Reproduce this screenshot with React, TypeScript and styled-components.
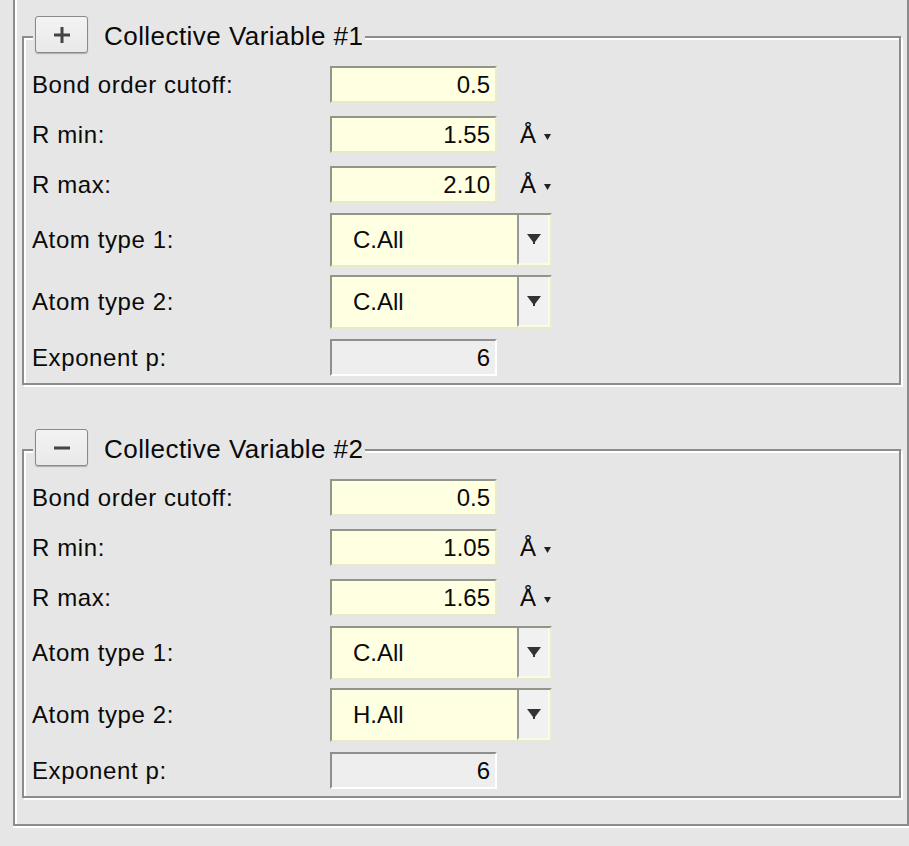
import styled, { createGlobalStyle } from "styled-components";

const GlobalStyle = createGlobalStyle`
  html, body {
    margin: 0;
    padding: 0;
    background: #e6e6e6;
  }
  body {
    font-family: "Liberation Sans", Arial, sans-serif;
    color: #0a0a0a;
  }
`;

const Page = styled.div`
  width: 909px;
  height: 846px;
  overflow: hidden;
`;

const Outer = styled.div`
  margin-left: 13px;
  width: 896px;
  box-sizing: border-box;
  padding: 36px 6px 26px 7px;
  border: 2px solid #8c8c8c;
  border-top: none;
  box-shadow: inset 2px 0 0 #fff, 0 2px 0 #fff;
`;

const Group = styled.div<{ $gap?: number }>`
  box-sizing: border-box;
  margin-top: ${(p) => p.$gap ?? 0}px;
  width: 879px;
  border: 2px solid #8c8c8c;
  box-shadow: inset 2px 2px 0 #fff, 2px 2px 0 #fff;
  padding: 0 0 7px 8px;
`;

const Legend = styled.div`
  display: flex;
  align-items: center;
  width: fit-content;
  margin: -22px 0 0 1px;
  padding: 0 2px;
  height: 37px;
  background: #e6e6e6;
`;

const ToggleButton = styled.button`
  box-sizing: border-box;
  width: 53px;
  height: 37px;
  padding: 0;
  display: flex;
  align-items: center;
  justify-content: center;
  border: 1px solid #8a8a8a;
  border-radius: 3px;
  background: linear-gradient(#f3f3f3, #e9e9e9);
  box-shadow: 0 1px 1px rgba(0, 0, 0, 0.25);
`;

const Title = styled.span`
  margin-left: 16px;
  padding-top: 4px;
  font-size: 26px;
  letter-spacing: 0.45px;
`;

const Row = styled.div<{ $h: number; $top: number }>`
  display: flex;
  align-items: center;
  height: ${(p) => p.$h}px;
  margin-top: ${(p) => p.$top}px;
`;

const Label = styled.div`
  width: 298px;
  font-size: 24px;
  letter-spacing: 0.6px;
`;

const Field = styled.div<{ $disabled?: boolean }>`
  box-sizing: border-box;
  width: 167px;
  height: 37px;
  padding: 0 5px 0 0;
  display: flex;
  align-items: center;
  justify-content: flex-end;
  font-size: 24px;
  background: ${(p) => (p.$disabled ? "#eeeeee" : "#ffffe2")};
  border-style: solid;
  border-width: 2px;
  border-color: ${(p) =>
    p.$disabled
      ? "#8e8e8e #ffffff #ffffff #8e8e8e"
      : "#92958a #ecebd2 #e8e8cc #92958a"};
`;

const Unit = styled.div`
  display: flex;
  align-items: center;
  margin-left: 23px;
  font-size: 24px;
  gap: 8px;
`;

const Combo = styled.div`
  box-sizing: border-box;
  width: 222px;
  height: 54px;
  display: flex;
  background: #ffffe2;
  border-style: solid;
  border-width: 2px;
  border-color: #92958a #ecebd2 #e8e8cc #92958a;
`;

const ComboText = styled.div`
  flex: 1;
  display: flex;
  align-items: center;
  padding-left: 21px;
  font-size: 24px;
`;

const ComboArrow = styled.div`
  box-sizing: border-box;
  width: 33px;
  display: flex;
  align-items: center;
  justify-content: center;
  background: #f1f1f1;
  border-left: 2px solid #9a9a9a;
  border-right: 2px solid #fafae8;
  border-bottom: 2px solid #fafae8;
`;

function Caret() {
  return (
    <svg width="7" height="6" viewBox="0 0 7 6" style={{ marginTop: 4 }}>
      <polygon points="0,0 7,0 3.5,6" fill="#222" />
    </svg>
  );
}

function ComboCaret() {
  return (
    <svg width="14" height="10" viewBox="0 0 14 10">
      <polygon points="0,0 14,0 8,8 8,10 6,10 6,8" fill="#333" />
    </svg>
  );
}

function ToggleIcon({ open }: { open: boolean }) {
  return (
    <svg width="16" height="16" viewBox="0 0 16 16">
      <rect x="0" y="6.5" width="16" height="3" fill="#444" />
      {open && <rect x="6.5" y="0" width="3" height="16" fill="#444" />}
    </svg>
  );
}

type CV = {
  id: number;
  open: boolean;
  cutoff: string;
  rmin: string;
  rmax: string;
  atom1: string;
  atom2: string;
  exponent: string;
};

const variables: CV[] = [
  { id: 1, open: true, cutoff: "0.5", rmin: "1.55", rmax: "2.10", atom1: "C.All", atom2: "C.All", exponent: "6" },
  { id: 2, open: false, cutoff: "0.5", rmin: "1.05", rmax: "1.65", atom1: "C.All", atom2: "H.All", exponent: "6" },
];

function VariableGroup({ cv, gap }: { cv: CV; gap: number }) {
  return (
    <Group $gap={gap}>
      <Legend>
        <ToggleButton>
          <ToggleIcon open={cv.open} />
        </ToggleButton>
        <Title>Collective Variable #{cv.id}</Title>
      </Legend>
      <Row $h={37} $top={13}>
        <Label>Bond order cutoff:</Label>
        <Field>{cv.cutoff}</Field>
      </Row>
      <Row $h={37} $top={13}>
        <Label>R min:</Label>
        <Field>{cv.rmin}</Field>
        <Unit>
          Å <Caret />
        </Unit>
      </Row>
      <Row $h={37} $top={13}>
        <Label>R max:</Label>
        <Field>{cv.rmax}</Field>
        <Unit>
          Å <Caret />
        </Unit>
      </Row>
      <Row $h={54} $top={10}>
        <Label>Atom type 1:</Label>
        <Combo>
          <ComboText>{cv.atom1}</ComboText>
          <ComboArrow>
            <ComboCaret />
          </ComboArrow>
        </Combo>
      </Row>
      <Row $h={54} $top={8}>
        <Label>Atom type 2:</Label>
        <Combo>
          <ComboText>{cv.atom2}</ComboText>
          <ComboArrow>
            <ComboCaret />
          </ComboArrow>
        </Combo>
      </Row>
      <Row $h={37} $top={10}>
        <Label>Exponent p:</Label>
        <Field $disabled>{cv.exponent}</Field>
      </Row>
    </Group>
  );
}

export default function App() {
  return (
    <Page>
      <GlobalStyle />
      <Outer>
        {variables.map((cv, i) => (
          <VariableGroup key={cv.id} cv={cv} gap={i === 0 ? 0 : 64} />
        ))}
      </Outer>
    </Page>
  );
}
